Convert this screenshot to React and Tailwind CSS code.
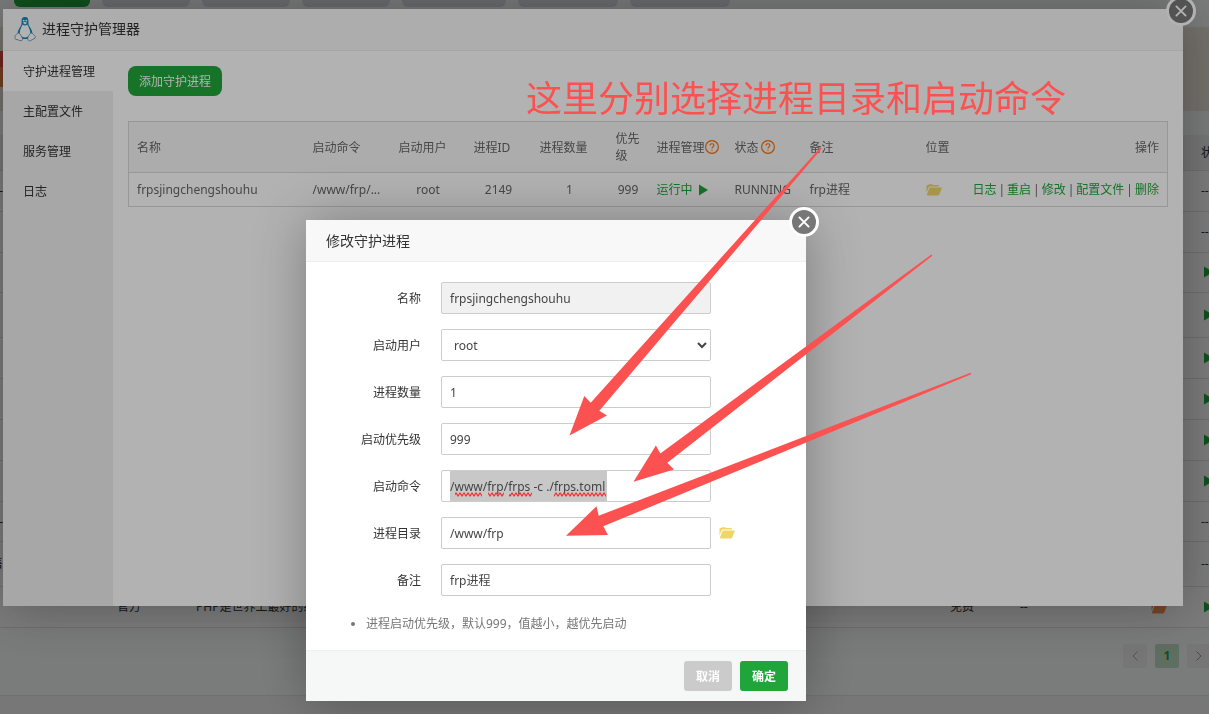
import { useState } from "react";

const menu = ["守护进程管理", "主配置文件", "服务管理", "日志"];

const tabs = [
  "w-[76px] bg-[#20a53a]",
  "w-[88px] bg-[#d9dde2]",
  "w-[88px] bg-[#d9dde2]",
  "w-[88px] bg-[#d9dde2]",
  "w-[104px] bg-[#d9dde2]",
  "w-[100px] bg-[#d9dde2]",
  "w-[100px] bg-[#d9dde2]",
];

const softRows = [
  { height: "h-[41px]", running: false, edge: "-" },
  { height: "h-[41px]", running: false },
  { height: "h-[40px]", running: true },
  { height: "h-[45px]", running: true },
  { height: "h-[41px]", running: true },
  { height: "h-[41px]", running: true },
  { height: "h-[41px]", running: true },
  { height: "h-[41px]", running: true },
  { height: "h-[40px]", running: false, edge: "-" },
  { height: "h-[45px]", running: false, edge: "售" },
  {
    height: "h-[41px]",
    running: true,
    vendor: "官方",
    desc: "PHP是世界上最好的编程语言",
    price: "免费",
    expire: "--",
    folder: true,
  },
];

const PlayIcon = () => (
  <svg viewBox="0 0 9 12" className="inline-block shrink-0 w-[9px] h-3" fill="#20a53a">
    <path d="M0 0.5 L9 6 L0 11.5 Z" />
  </svg>
);

const FolderIcon = ({ color = "#efd668" }) => (
  <svg viewBox="0 0 16 12" className="inline-block w-4 h-3" fill={color}>
    <path d="M0.5 8.6 V1.6 Q0.5 1 1.2 1 H2.3 L3 0.2 H6.3 L7 1 H12.2 Q12.9 1 12.9 1.7 V2.6 H4.2 Q3.1 2.6 2.6 3.6 Z" />
    <path d="M4.4 3.4 H15.2 Q16 3.4 15.7 4.2 L13.3 10.6 Q13 11.4 12.2 11.4 H1.3 Q0.6 11.4 0.9 10.6 L3.4 4.2 Q3.7 3.4 4.4 3.4 Z" />
  </svg>
);

const HelpIcon = () => (
  <svg
    viewBox="0 0 14 14"
    className="w-[14px] h-[14px] shrink-0"
    fill="none"
    stroke="#f7700a"
  >
    <circle cx="7" cy="7" r="6.4" strokeWidth="1.2" />
    <path d="M5 5.6 Q5 3.7 7 3.7 Q9 3.7 9 5.3 Q9 6.2 8 6.8 Q7 7.4 7 8.6" strokeWidth="1.1" />
    <path d="M7 9.7 V10.8" strokeWidth="1.2" />
  </svg>
);

const Penguin = () => (
  <svg viewBox="0 0 22 26" className="w-[22px] h-[26px]">
    <path
      d="M11 1 C8.2 1 7.4 3 7.6 5.2 C7.8 8 7.4 9 6 11.2 C4.4 13.6 3.4 15.8 3.6 18 L6.2 21.6 C7.4 23.6 14.6 23.6 15.8 21.6 L18.4 18 C18.6 15.4 17.2 13 15.8 11 C14.4 8.8 14.4 7.8 14.4 5.2 C14.4 2.6 13.6 1 11 1 Z"
      fill="#1688bd"
    />
    <path
      d="M8.6 8.6 C7.8 11 5.8 13.4 5.8 16.6 C5.8 19.6 8 21.4 11 21.4 C14 21.4 16.2 19.6 16.2 16.6 C16.2 13.4 14.2 11 13.4 8.6 C12 9.8 10 9.8 8.6 8.6 Z"
      fill="#fff"
    />
    <path d="M8.8 6.8 L11 5.8 L13.2 6.8 L11 8.6 Z" fill="#fff" />
    <circle cx="9.7" cy="4.6" r="0.9" fill="#fff" />
    <circle cx="12.3" cy="4.6" r="0.9" fill="#fff" />
    <g fill="#fff" stroke="#6f93a3" strokeWidth="0.9">
      <path d="M4.2 17 C2.8 17.4 3 18.8 1.4 19.4 C0.6 19.8 1.4 21 1 22.6 C1.2 23.6 4.4 23.6 6 24.6 C7.6 25.2 9 24 8.4 22.2 C7.4 20.4 6 17 4.2 17 Z" />
      <path d="M17.8 17 C19.2 17.4 19 18.8 20.6 19.6 C21.6 20.2 21.4 21.2 21 22.2 C19.6 23 18 23.6 16.6 24.6 C15.2 25.4 13.4 24.2 13.8 22.2 C14.2 20 15.8 17 17.8 17 Z" />
    </g>
  </svg>
);

const CloseButton = () => (
  <button
    type="button"
    aria-label="关闭"
    className="absolute -top-[13px] -right-[13px] w-[30px] h-[30px] rounded-full border-[3px] border-white bg-[#777] flex items-center justify-center"
  >
    <svg viewBox="0 0 12 12" className="w-3 h-3" stroke="#fff" strokeWidth="1.9" strokeLinecap="round">
      <path d="M1.4 1.4 L10.6 10.6 M10.6 1.4 L1.4 10.6" />
    </svg>
  </button>
);

const SoftwarePage = () => (
  <div className="h-screen overflow-hidden bg-[#f2f2f2] text-[#333]">
    <div className="bg-[#f9fdfa] border-b border-[#e2e6e3]">
      <div className="h-[27px] flex gap-3 pl-[14px]">
        {tabs.map((tab, i) => (
          <div key={i} className={`h-[7px] shrink-0 rounded-b-md ${tab}`} />
        ))}
      </div>
      <div className="h-[84px] bg-[#eee6da] flex flex-col">
        <div className="h-6" />
        <div className="w-1 h-4 bg-[#f04848]" />
        <div className="w-1 h-5 bg-[#ec8244]" />
      </div>
      <div className="h-6" />
      <table className="w-full table-fixed bg-[#fdfdfd]">
        <colgroup>
          <col className="w-[3px]" />
          <col className="w-[114px]" />
          <col className="w-[79px]" />
          <col />
          <col className="w-[70px]" />
          <col className="w-[131px]" />
          <col className="w-[50px]" />
          <col className="w-[8px]" />
        </colgroup>
        <thead>
          <tr className="h-[35px] bg-[#efefef] border-b border-[#e0e0e0]">
            <th colSpan={7} />
            <th className="font-normal whitespace-nowrap overflow-hidden text-left">状态</th>
          </tr>
        </thead>
        <tbody>
          {softRows.map((row, i) => (
            <tr key={i} className={`${row.height} border-b border-[#e0e0e0] whitespace-nowrap`}>
              <td>
                <div className="flex justify-end overflow-hidden">{row.edge}</div>
              </td>
              <td />
              <td>{row.vendor}</td>
              <td className="overflow-hidden">{row.desc}</td>
              <td>{row.price}</td>
              <td>{row.expire}</td>
              <td>{row.folder && <FolderIcon color="#f09050" />}</td>
              <td className="overflow-hidden">
                {row.running ? <span className="flex pl-[3px]"><PlayIcon /></span> : "--"}
              </td>
            </tr>
          ))}
        </tbody>
      </table>
      <div className="h-[67px] pt-4 flex justify-end gap-2 -mr-[2px]">
        <button type="button" aria-label="上一页" className="w-6 h-6 rounded-xs bg-[#f0f0f0] flex items-center justify-center">
          <svg viewBox="0 0 6 10" className="w-[6px] h-[10px]" fill="none" stroke="#aaa"><path d="M5.5 0.5 L1 5 L5.5 9.5" /></svg>
        </button>
        <button type="button" className="w-6 h-6 rounded-xs bg-[#bfe3c8] text-[#20a53a] font-bold text-xs">1</button>
        <button type="button" aria-label="下一页" className="w-6 h-6 rounded-xs bg-[#f0f0f0] flex items-center justify-center">
          <svg viewBox="0 0 6 10" className="w-[6px] h-[10px]" fill="none" stroke="#999"><path d="M0.5 0.5 L5 5 L0.5 9.5" /></svg>
        </button>
      </div>
    </div>
  </div>
);

const ProcessTable = () => (
  <table className="w-full table-fixed border border-[#d8d8d8] text-[#666] text-left">
    <colgroup>
      <col className="w-[176px]" />
      <col className="w-[86px]" />
      <col className="w-[75px]" />
      <col className="w-[66px]" />
      <col className="w-[76px]" />
      <col className="w-[41px]" />
      <col className="w-[78px]" />
      <col className="w-[75px]" />
      <col className="w-[116px]" />
      <col className="w-[45px]" />
      <col />
    </colgroup>
    <thead>
      <tr className="h-[51px] bg-[#f6f6f6] border-b border-[#d8d8d8] [&>th]:px-2 [&>th]:font-normal">
        <th>名称</th>
        <th>启动命令</th>
        <th>启动用户</th>
        <th>进程ID</th>
        <th>进程数量</th>
        <th>优先级</th>
        <th>
          <span className="flex items-center whitespace-nowrap">进程管理<HelpIcon /></span>
        </th>
        <th>
          <span className="flex items-center gap-[2px] whitespace-nowrap">状态<HelpIcon /></span>
        </th>
        <th>备注</th>
        <th className="whitespace-nowrap">位置</th>
        <th className="text-right">操作</th>
      </tr>
    </thead>
    <tbody>
      <tr className="h-[34px] [&>td]:px-2 whitespace-nowrap">
        <td>frpsjingchengshouhu</td>
        <td>/www/frp/...</td>
        <td className="text-center">root</td>
        <td className="text-center">2149</td>
        <td className="text-center">1</td>
        <td className="text-center">999</td>
        <td>
          <a href="#" className="text-[#20a53a] flex items-center gap-[6px]">运行中 <PlayIcon /></a>
        </td>
        <td>RUNNING</td>
        <td>frp进程</td>
        <td>
          <a href="#" aria-label="打开目录" className="flex"><FolderIcon /></a>
        </td>
        <td>
          <div className="flex justify-end gap-[2px] [&>a]:text-[#20a53a]">
            <a href="#">日志</a>|<a href="#">重启</a>|<a href="#">修改</a>|<a href="#">配置文件</a>|<a href="#">删除</a>
          </div>
        </td>
      </tr>
    </tbody>
  </table>
);

const ManagerDialog = () => (
  <div className="fixed inset-0 bg-black/30 pt-[9px] pl-[3px] pr-[26px]">
    <div className="relative w-full bg-white shadow-[1px_1px_50px_rgba(0,0,0,0.3)]">
      <CloseButton />
      <div className="h-[42px] pl-[11px] pb-[2px] bg-[#f8f8f8] border-b border-[#eee] flex items-center gap-[6px] text-sm text-[#333]">
        <Penguin />
        进程守护管理器
      </div>
      <div className="flex min-h-[555px]">
        <nav className="w-[110px] shrink-0 bg-[#f0f0f0] text-[#333]">
          {menu.map((item, i) => (
            <a
              key={item}
              href="#"
              className={`flex items-center h-10 pl-5 ${i === 0 ? "bg-white" : ""}`}
            >
              {item}
            </a>
          ))}
        </nav>
        <div className="flex-1 p-[15px]">
          <button type="button" className="h-[30px] px-[11px] rounded-lg bg-[#20a53a] text-white mb-[25px] block">
            添加守护进程
          </button>
          <ProcessTable />
        </div>
      </div>
    </div>
  </div>
);

const Field = ({ id, label, children }) => (
  <div className="flex items-center mb-[15px]">
    <label htmlFor={id} className="w-[115px] mr-5 text-right text-[#333]">{label}</label>
    {children}
  </div>
);

const inputClass = "w-[270px] h-8 px-2 border border-[#ccc] rounded-xs text-[#444]";

const Squiggle = () => (
  <svg className="absolute left-[9px] top-[22px] w-40 h-[5px] pointer-events-none" viewBox="0 0 160 5">
    <defs>
      <pattern id="wave" width="4" height="5" patternUnits="userSpaceOnUse">
        <path d="M-1 2.5 L0 4 L2 1 L4 4 L5 2.5" fill="none" stroke="#f22" strokeWidth="1.1" />
      </pattern>
    </defs>
    <g fill="url(#wave)">
      <rect x="5" width="27" height="5" />
      <rect x="38" width="16" height="5" />
      <rect x="59" width="23" height="5" />
      <rect x="104" width="52" height="5" />
    </g>
  </svg>
);

const EditDialog = () => {
  const [form, setForm] = useState({
    user: "root",
    count: "1",
    priority: "999",
    command: "/www/frp/frps -c ./frps.toml",
    path: "/www/frp",
    remark: "frp进程",
  });
  const update = (e) => setForm({ ...form, [e.target.name]: e.target.value });

  return (
    <div className="fixed inset-0 bg-black/30 flex justify-center items-start pt-[220px] pr-[97px]">
      <form
        onSubmit={(e) => e.preventDefault()}
        className="relative w-[500px] bg-white shadow-[1px_1px_50px_rgba(0,0,0,0.3)]"
      >
        <CloseButton />
        <h2 className="h-[42px] pl-5 flex items-center bg-[#f8f8f8] border-b border-[#eee] text-sm text-[#333]">
          修改守护进程
        </h2>
        <div className="pt-5 pb-[17px]">
          <Field id="name" label="名称">
            <input id="name" className={`${inputClass} bg-[#f1f1f1]`} value="frpsjingchengshouhu" readOnly />
          </Field>
          <Field id="user" label="启动用户">
            <select id="user" name="user" className={`${inputClass} bg-white pr-0`} value={form.user} onChange={update}>
              <option>root</option>
            </select>
          </Field>
          <Field id="count" label="进程数量">
            <input id="count" name="count" className={inputClass} value={form.count} onChange={update} />
          </Field>
          <Field id="priority" label="启动优先级">
            <input id="priority" name="priority" className={inputClass} value={form.priority} onChange={update} />
          </Field>
          <Field id="command" label="启动命令">
            <div className="relative">
              <input
                id="command"
                name="command"
                spellCheck={false}
                className={`${inputClass} block bg-[linear-gradient(#c8c8c8,#c8c8c8)] bg-no-repeat bg-[length:157px_100%] bg-[position:8px_0]`}
                value={form.command}
                onChange={update}
              />
              <Squiggle />
            </div>
          </Field>
          <Field id="path" label="进程目录">
            <input id="path" name="path" className={inputClass} value={form.path} onChange={update} />
            <button type="button" aria-label="选择目录" className="ml-2 flex"><FolderIcon /></button>
          </Field>
          <Field id="remark" label="备注">
            <input id="remark" name="remark" className={inputClass} value={form.remark} onChange={update} />
          </Field>
          <ul className="list-disc pl-[60px] pt-[3px] text-[#777] leading-[19px]">
            <li>进程启动优先级，默认999，值越小，越优先启动</li>
          </ul>
        </div>
        <div className="h-[51px] px-[18px] flex justify-end items-center gap-2 bg-[#f6f8f8] border-t border-[#edf1f2] text-white font-bold">
          <button type="button" className="w-12 h-[30px] rounded-[3px] bg-[#cbcbcb]">取消</button>
          <button type="submit" className="w-12 h-[30px] rounded-[3px] bg-[#20a53a]">确定</button>
        </div>
      </form>
    </div>
  );
};

const Annotations = () => (
  <div className="fixed inset-0 pointer-events-none text-[#fb5151]">
    <p className="absolute left-[526px] top-[74px] text-4xl leading-[50px] whitespace-nowrap">
      这里分别选择进程目录和启动命令
    </p>
    <svg width="1209" height="714" className="absolute top-0 left-0" fill="currentColor">
      <path d="M820.3 147.5 L821.7 148.7 L599.3 410.7 L607 415.5 L569.5 435.5 L584.3 396 L590.7 402.7 Z" />
      <path d="M931.4 254.4 L932.4 255.8 L667.3 462.7 L674 469.5 L633.5 481.7 L655.9 445.5 L660.3 453.5 Z" />
      <path d="M970.6 372.7 L971.2 374.3 L603.3 526.3 L608 535 L566 535.8 L596.5 506.3 L598.7 515.7 Z" />
    </svg>
  </div>
);

export default function App() {
  return (
    <div className="font-['Noto_Sans','Noto_Sans_CJK_SC',sans-serif] text-xs leading-[17px]">
      <SoftwarePage />
      <ManagerDialog />
      <EditDialog />
      <Annotations />
    </div>
  );
}
